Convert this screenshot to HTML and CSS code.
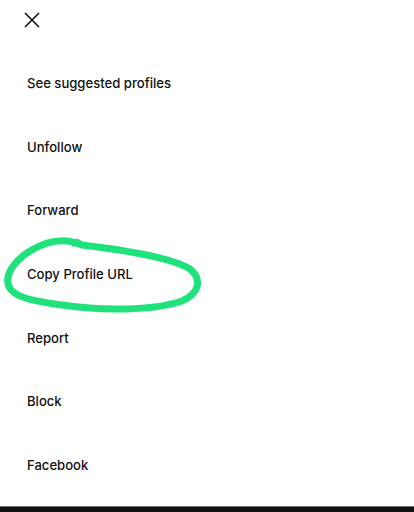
FILE: index.html
```html
<!DOCTYPE html>
<html lang="en">
<head>
  <meta charset="UTF-8">
  <meta name="viewport" content="width=device-width, initial-scale=1.0">
  <title>Profile options</title>
  <link rel="stylesheet" href="styles.css">
</head>
<body>
  <div class="sheet">
    <header class="sheet-header">
      <button class="close-btn" aria-label="Close">
        <svg width="16" height="16" viewBox="0 0 16 16">
          <path d="M1 1 L15 15 M15 1 L1 15" stroke="#111" stroke-width="1.6" fill="none"/>
        </svg>
      </button>
    </header>
    <ul class="menu">
      <li class="menu-item">See suggested profiles</li>
      <li class="menu-item">Unfollow</li>
      <li class="menu-item">Forward</li>
      <li class="menu-item highlighted">
        Copy Profile URL
        <svg class="scribble" width="200" height="86" viewBox="0 0 200 86">
          <path d="M80 10 C62 2 44 6 28 16 C12 26 2 40 7 52 C12 62 30 66 60 70 C100 76 150 76 180 66 C198 58 200 44 188 34 C172 24 130 16 80 10 C76 8 74 6 72 8"
                stroke="#1fe27a" stroke-width="7" fill="none" stroke-linecap="round" stroke-linejoin="round"/>
        </svg>
      </li>
      <li class="menu-item">Report</li>
      <li class="menu-item">Block</li>
      <li class="menu-item">Facebook</li>
    </ul>
    <div class="bottom-bar"></div>
  </div>
</body>
</html>
```

FILE: styles.css
```css
body {
  margin: 0;
  padding: 0;
  background-color: #fff;
  font-family: Inter, "Noto Sans", sans-serif;
}
.sheet {
  height: 512px;
  display: flex;
  flex-direction: column;
  overflow: hidden;
}
.sheet-header {
  height: 51px;
  display: flex;
  align-items: center;
  padding-left: 24px;
  box-sizing: border-box;
  padding-bottom: 12px;
}
.close-btn {
  border: none;
  background: none;
  padding: 0;
  width: 16px;
  height: 16px;
  display: flex;
  cursor: pointer;
}
.menu {
  list-style: none;
  margin: 0;
  padding: 0;
}
.menu-item {
  height: 63.7px;
  display: flex;
  align-items: center;
  padding-left: 27px;
  font-size: 13.1px;
  font-weight: 500;
  color: #111;
}
.highlighted {
  position: relative;
}
.scribble {
  position: absolute;
  left: 2px;
  top: -7px;
  pointer-events: none;
}
.bottom-bar {
  margin-top: auto;
  height: 5px;
  background-color: #111;
  border-top: 1px solid #777;
}
```
